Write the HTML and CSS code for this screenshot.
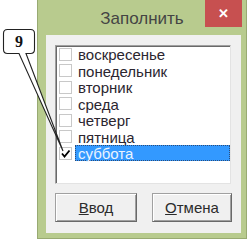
FILE: index.html
```html
<!DOCTYPE html>
<html lang="ru">
<head>
    <meta charset="UTF-8">
    <title>Заполнить</title>
    <link rel="stylesheet" href="styles.css">
</head>
<body>
    <div class="window">
        <div class="titlebar">
            <span class="title">Заполнить</span>
            <span class="close">&#x2715;</span>
        </div>
        <div class="panel">
            <ul class="list">
                <li class="item"><span class="box"></span><span class="label">воскресенье</span></li>
                <li class="item"><span class="box"></span><span class="label">понедельник</span></li>
                <li class="item"><span class="box"></span><span class="label">вторник</span></li>
                <li class="item"><span class="box"></span><span class="label">среда</span></li>
                <li class="item"><span class="box"></span><span class="label">четверг</span></li>
                <li class="item"><span class="box"></span><span class="label">пятница</span></li>
                <li class="item selected">
                    <span class="box">
                        <svg width="11" height="11" viewBox="0 0 11 11"><polyline points="2,5.5 4.5,8.5 9.5,2.5" fill="none" stroke="#000" stroke-width="1.8"/></svg>
                    </span>
                    <span class="label">суббота</span>
                </li>
            </ul>
            <div class="buttons">
                <button class="btn btn-ok"><u>В</u>вод</button>
                <button class="btn btn-cancel"><u>О</u>тмена</button>
            </div>
        </div>
    </div>

    <!-- callout pointing at the checked item -->
    <svg class="callout" width="250" height="240" viewBox="0 0 250 240">
        <path d="M7.5 29.5 H30.5 Q34.5 29.5 34.5 33.5 V49.5 Q34.5 53.5 30.5 53.5 H26 L63 151 L19 53.5 H7.5 Q3.5 53.5 3.5 49.5 V33.5 Q3.5 29.5 7.5 29.5 Z" fill="#fff" stroke="#222" stroke-width="1.1"/>
        <text x="19" y="47" class="callout-num">9</text>
    </svg>
</body>
</html>
```

FILE: styles.css
```css
* {
    box-sizing: border-box;
}
body {
    margin: 0;
    width: 250px;
    height: 240px;
    background-color: #fff;
    position: relative;
    overflow: hidden;
    font-family: "Liberation Sans", Arial, sans-serif;
}
.window {
    margin: -1px 0 0 37px;
    width: 210px;
    height: 240px;
    background-color: #b8cb8e;
    border: 1px solid #98aa72;
    display: flex;
    flex-direction: column;
}
.titlebar {
    height: 35px;
    display: grid;
    grid-template-columns: 1fr auto 1fr;
}
.title {
    grid-column: 2;
    padding-top: 9px;
    font-size: 17px;
    color: #444;
}
.close {
    grid-column: 3;
    justify-self: end;
    width: 37px;
    height: 27px;
    margin-right: 4px;
    background-color: #c75050;
    color: #fff;
    font-size: 13px;
    font-weight: bold;
    display: flex;
    align-items: center;
    justify-content: center;
}
.panel {
    flex: 1;
    margin: 0 5px 5px 8px;
    background-color: #f0f0f0;
    padding: 10px 9px 0;
}
.list {
    list-style: none;
    margin: 0;
    padding: 0;
    width: 176px;
    height: 139px;
    background-color: #fff;
    border: 1px solid #a0a0a0;
    border-right-color: #e3e3e3;
    border-bottom-color: #e3e3e3;
    box-shadow: inset 1px 1px 0 #696969;
}
.item {
    height: 16.5px;
    display: flex;
    align-items: center;
    padding-left: 3px;
    font-size: 15px;
    color: #2b2630;
}
.box {
    width: 13px;
    height: 13px;
    border: 1px solid #c8c8c8;
    background-color: #fff;
    display: flex;
    align-items: center;
    justify-content: center;
    flex-shrink: 0;
}
.label {
    flex: 1;
    height: 16px;
    line-height: 15px;
    margin-left: 3px;
    padding-left: 2px;
    border: 1px solid transparent;
}
.selected .label {
    background-color: #3399ff;
    border: 1px dotted #2c4c78;
    color: #eaf4ff;
}
.buttons {
    display: flex;
    gap: 15px;
    margin-top: 9px;
}
.btn {
    height: 29px;
    font-family: "Liberation Sans", Arial, sans-serif;
    font-size: 15px;
    color: #2b2b2b;
    background-color: #f0f0f0;
    border: 1px solid #a0a0a0;
    border-right-color: #696969;
    border-bottom-color: #696969;
    box-shadow: inset 1px 1px 0 #fff, inset -1px -1px 0 #a0a0a0;
    padding: 0;
}
.btn-ok {
    width: 82px;
}
.btn-cancel {
    width: 80px;
}
.callout {
    position: absolute;
    left: 0;
    top: 0;
    pointer-events: none;
}
.callout-num {
    font-family: "Liberation Serif", "Times New Roman", serif;
    font-weight: bold;
    font-size: 16px;
    text-anchor: middle;
    fill: #111;
}
```
